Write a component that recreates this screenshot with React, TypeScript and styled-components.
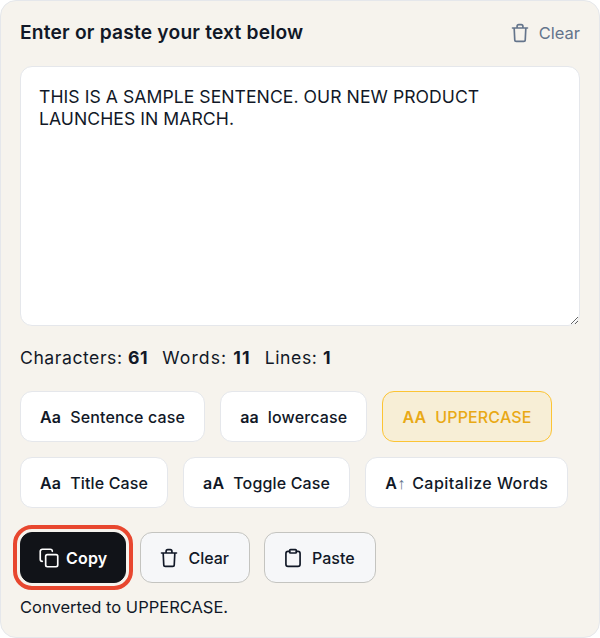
import React from "react";
import styled, { createGlobalStyle } from "styled-components";

const Global = createGlobalStyle`
  html, body { margin: 0; padding: 0; background: #fff; }
  body { font-family: Inter, "Liberation Sans", sans-serif; color: #111827; }
  * { box-sizing: border-box; }
`;

const Card = styled.main`
  width: 600px;
  height: 638px;
  padding: 19px 19px 0;
  background: #f6f3ed;
  border: 1px solid #e5e7eb;
  border-radius: 16px;
`;

const Header = styled.header`
  height: 25px;
  display: flex;
  align-items: center;
  justify-content: space-between;
  margin-bottom: 21px;
`;

const Title = styled.h2`
  margin: 0;
  font-size: 19.2px;
  font-weight: 600;
  line-height: 25px;
  letter-spacing: 0.2px;
`;

const GhostClear = styled.button`
  display: flex;
  align-items: center;
  gap: 9px;
  padding: 0;
  border: 0;
  background: none;
  color: #64748b;
  font: 400 16.5px Inter, sans-serif;
`;

const Editor = styled.textarea`
  display: block;
  width: 560px;
  height: 260px;
  padding: 19px 18px;
  background: #fff;
  border: 1px solid #e5e7eb;
  border-radius: 12px;
  color: #111827;
  font: 400 17.6px/22px Inter, sans-serif;
  letter-spacing: 0.05px;
  outline: none;
`;

const Stats = styled.p`
  display: flex;
  gap: 14px;
  margin: 20px 0 21px;
  font-size: 17.6px;
  line-height: 24px;
  b { font-weight: 700; }
`;

const Stat = styled.span<{ $track: number }>`
  letter-spacing: ${(p) => p.$track}px;
`;

const CaseRow = styled.div`
  display: flex;
  gap: 15px;
  margin-bottom: 15px;
`;

const CaseButton = styled.button<{ $active?: boolean; $track?: number }>`
  display: flex;
  align-items: center;
  gap: 9px;
  height: 51px;
  padding: 0 19px;
  background: ${(p) => (p.$active ? "#f7eed6" : "#fff")};
  border: 1px solid ${(p) => (p.$active ? "#fcc434" : "#e5e7eb")};
  border-radius: 12px;
  color: ${(p) => (p.$active ? "#e9a915" : "#111827")};
  font: 500 16px Inter, sans-serif;
  letter-spacing: ${(p) => p.$track ?? 0.15}px;
`;

const Glyph = styled.span`
  font-weight: 600;
`;

const Arrow = styled.span`
  color: #64748b;
  font: 400 16px "Liberation Sans", sans-serif;
  margin-right: -2.5px;
`;

const Actions = styled.div`
  display: flex;
  gap: 14px;
  margin-top: 24px;
`;

const ActionButton = styled.button<{ $primary?: boolean }>`
  display: flex;
  align-items: center;
  gap: ${(p) => (p.$primary ? "7px" : "9px")};
  height: 51px;
  padding: 0 ${(p) => (p.$primary ? "18px" : "20px")} 0 18px;
  background: ${(p) => (p.$primary ? "#111318" : "#f6f7f9")};
  border: 1px solid ${(p) => (p.$primary ? "#111318" : "#c4c4c0")};
  border-radius: 12px;
  color: ${(p) => (p.$primary ? "#fff" : "#111827")};
  font: ${(p) => (p.$primary ? 600 : 500)} 16px Inter, sans-serif;
  ${(p) => (p.$primary ? "letter-spacing: 0.2px; outline: 4px solid #e8472f; outline-offset: 3px;" : "")}
`;

const Status = styled.p`
  margin: 13px 0 0;
  font-size: 16.5px;
  line-height: 22px;
`;

const IconSvg = styled.svg`
  width: 20px;
  height: 20px;
  flex: none;
  fill: none;
  stroke: currentColor;
  stroke-width: 2;
  stroke-linecap: round;
  stroke-linejoin: round;
`;

const Trash = () => (
  <IconSvg viewBox="0 0 24 24">
    <path d="M3 6h18M5 6l.7 14a2 2 0 0 0 2 2h8.6a2 2 0 0 0 2-2L19 6M8.5 6V4a2 2 0 0 1 2-2h3a2 2 0 0 1 2 2v2" />
  </IconSvg>
);
const Copy = () => (
  <IconSvg viewBox="0 0 24 24">
    <rect x="8" y="8" width="14.5" height="14.5" rx="2" />
    <path d="M4 16a2.5 2.5 0 0 1-2.5-2.5V4A2.5 2.5 0 0 1 4 1.5h9.5A2.5 2.5 0 0 1 16 4" />
  </IconSvg>
);
const Clip = () => (
  <IconSvg viewBox="0 0 24 24">
    <rect x="8" y="2" width="8" height="4" rx="1" />
    <path d="M16 4h2a2.5 2.5 0 0 1 2.5 2.5v13A2.5 2.5 0 0 1 18 22H6a2.5 2.5 0 0 1-2.5-2.5v-13A2.5 2.5 0 0 1 6 4h2" />
  </IconSvg>
);

export default function App() {
  return (
    <>
      <Global />
      <Card>
        <Header>
          <Title>Enter or paste your text below</Title>
          <GhostClear><Trash />Clear</GhostClear>
        </Header>
        <Editor
          readOnly
          value="THIS IS A SAMPLE SENTENCE. OUR NEW PRODUCT LAUNCHES IN MARCH."
        />
        <Stats>
          <Stat $track={0.55}>Characters: <b>61</b></Stat>
          <Stat $track={1.1}>Words: <b>11</b></Stat>
          <Stat $track={0.6}>Lines: <b>1</b></Stat>
        </Stats>
        <CaseRow>
          <CaseButton><Glyph>Aa</Glyph>Sentence case</CaseButton>
          <CaseButton><Glyph>aa</Glyph>lowercase</CaseButton>
          <CaseButton $active><Glyph>AA</Glyph>UPPERCASE</CaseButton>
        </CaseRow>
        <CaseRow>
          <CaseButton><Glyph>Aa</Glyph>Title Case</CaseButton>
          <CaseButton><Glyph>aA</Glyph>Toggle Case</CaseButton>
          <CaseButton $track={0.45}><Glyph>A<Arrow>↑</Arrow></Glyph>Capitalize Words</CaseButton>
        </CaseRow>
        <Actions>
          <ActionButton $primary><Copy />Copy</ActionButton>
          <ActionButton><Trash />Clear</ActionButton>
          <ActionButton><Clip />Paste</ActionButton>
        </Actions>
        <Status>Converted to UPPERCASE.</Status>
      </Card>
    </>
  );
}
